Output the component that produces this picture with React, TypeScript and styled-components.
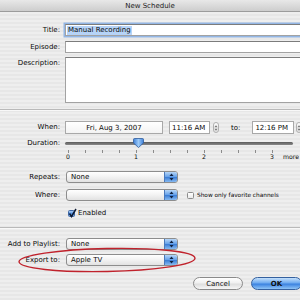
import styled, { createGlobalStyle } from "styled-components";

const GlobalStyle = createGlobalStyle`
  html, body { margin: 0; padding: 0; }
  body { font-family: "DejaVu Sans", "Noto Sans", sans-serif; }
`;

const Window = styled.div`
  width: 300px;
  height: 300px;
  overflow: hidden;
  position: relative;
  background: repeating-linear-gradient(#eeeeee 0 2px, #e7e7e7 2px 4px);
  font-family: "DejaVu Sans", "Noto Sans", sans-serif;
  font-size: 7px;
  color: #0a0a0a;
`;

const TitleBar = styled.div`
  height: 11px;
  border-bottom: 1px solid #9c9c9c;
  background: linear-gradient(#e8e8e8, #cdcdcd);
  display: flex;
  align-items: center;
  justify-content: center;
  color: #222;
`;

const Form = styled.div`
  display: flex;
  flex-direction: column;
`;

const Row = styled.div<{ $top: number; $h: number }>`
  display: grid;
  grid-template-columns: 60px 1fr;
  column-gap: 5px;
  align-items: center;
  margin-top: ${(p) => p.$top}px;
  height: ${(p) => p.$h}px;
`;

const Label = styled.div<{ $top?: boolean }>`
  text-align: right;
  line-height: 1;
  white-space: nowrap;
  align-self: ${(p) => (p.$top ? "start" : "center")};
  padding-top: ${(p) => (p.$top ? "3px" : "0")};
`;

const TextField = styled.div<{ $focus?: boolean }>`
  height: 100%;
  box-sizing: border-box;
  background: #fff;
  border: 1px solid #a2a2a2;
  border-top-color: #7c7c7c;
  margin-right: -20px;
  display: flex;
  align-items: center;
  padding-left: 1px;
  box-shadow: ${(p) => (p.$focus ? "0 0 0 1.5px #93b6e4" : "none")};
`;

const Selected = styled.span`
  background: #b6d3f7;
  line-height: 9px;
  padding: 0 1px;
`;

const Separator = styled.div<{ $top: number }>`
  height: 1px;
  background: #b9b9b9;
  border-bottom: 1px solid #f8f8f8;
  margin-top: ${(p) => p.$top}px;
`;

const Inline = styled.div`
  display: flex;
  align-items: center;
  height: 100%;
`;

const DateBox = styled.div`
  width: 98px;
  height: 100%;
  box-sizing: border-box;
  border: 1px solid #a8a8a8;
  background: linear-gradient(#ffffff, #f3f3f3);
  display: flex;
  align-items: center;
  justify-content: center;
`;

const TimeBox = styled.div<{ $ml: number; $w: number }>`
  width: ${(p) => p.$w}px;
  margin-left: ${(p) => p.$ml}px;
  height: 100%;
  box-sizing: border-box;
  border: 1px solid #a8a8a8;
  background: #fff;
  display: flex;
  align-items: center;
  padding-left: 2px;
`;

const Stepper = styled.div<{ $ml: number }>`
  margin-left: ${(p) => p.$ml}px;
  width: 6px;
  height: 11px;
  box-sizing: border-box;
  border: 1px solid #b0b0b0;
  border-radius: 3px;
  background: linear-gradient(#fdfdfd, #e3e3e3);
  display: flex;
  align-items: center;
  justify-content: center;
`;

const ToText = styled.span`
  margin-left: 12px;
`;

const SliderArea = styled.div`
  position: relative;
  height: 100%;
  width: 228px;
  display: flex;
  align-items: center;
`;

const Track = styled.div`
  width: 100%;
  height: 3px;
  border-radius: 2px;
  background: linear-gradient(#5a5a5a, #8a8a8a);
`;

const Thumb = styled.svg`
  position: absolute;
  left: 68px;
  top: 0;
`;

const TickRow = styled.div`
  margin-left: 68px;
  margin-top: 1px;
  width: 205px;
  height: 3px;
  display: flex;
  justify-content: space-between;
`;

const Tick = styled.div`
  width: 1px;
  height: 3px;
  background: #8c8c8c;
`;

const TickLabels = styled.div`
  margin-left: 60px;
  margin-top: 1px;
  height: 7px;
  display: flex;
  align-items: center;
  line-height: 1;
  font-size: 6.2px;
`;

const TickLabel = styled.span<{ $first?: boolean }>`
  width: 16px;
  text-align: center;
  margin-left: ${(p) => (p.$first ? 0 : 52)}px;
`;

const More = styled.span`
  margin-left: 3px;
`;

const Popup = styled.div`
  width: 112px;
  height: 100%;
  margin-left: 1px;
  box-sizing: border-box;
  border: 1px solid #8d8d8d;
  border-radius: 3px;
  background: linear-gradient(#ffffff, #f2f2f2 50%, #e2e2e2);
  display: flex;
  align-items: stretch;
  overflow: hidden;
`;

const PopupText = styled.div`
  flex: 1;
  display: flex;
  align-items: center;
  padding-left: 4px;
`;

const PopupArrows = styled.div`
  width: 12px;
  border-left: 1px solid #4a79bb;
  background: linear-gradient(#b6d6f8, #6aa4ea 45%, #3e7fd6 55%, #86baf2);
  display: flex;
  align-items: center;
  justify-content: center;
`;

const CheckBox = styled.div<{ $checked?: boolean; $ml: number }>`
  width: 7px;
  height: 7px;
  margin-left: ${(p) => p.$ml}px;
  box-sizing: border-box;
  border: 1px solid ${(p) => (p.$checked ? "#3e67a6" : "#8c8c8c")};
  border-radius: 1.5px;
  background: ${(p) =>
    p.$checked
      ? "linear-gradient(#a9cdf6, #4b8ce0 55%, #7db4f0)"
      : "linear-gradient(#ffffff, #e9e9e9)"};
  position: relative;
  flex: none;
`;

const CheckMark = styled.svg`
  position: absolute;
  left: -1px;
  top: -3px;
`;

const CheckText = styled.span<{ $small?: boolean }>`
  margin-left: 3px;
  font-size: ${(p) => (p.$small ? "5.8px" : "7px")};
  white-space: nowrap;
`;

const ButtonRow = styled.div`
  display: flex;
  gap: 8px;
  margin-top: 11px;
  padding-left: 193px;
  height: 13px;
`;

const Button = styled.div<{ $primary?: boolean }>`
  width: ${(p) => (p.$primary ? 51 : 50)}px;
  flex: none;
  height: 13px;
  box-sizing: border-box;
  border-radius: 7px;
  border: 1px solid ${(p) => (p.$primary ? "#34609f" : "#8a8a8a")};
  background: ${(p) =>
    p.$primary
      ? "linear-gradient(#c4e0fb, #6eaaf0 45%, #3b82e0 55%, #8fc4f7)"
      : "linear-gradient(#ffffff, #f0f0f0 45%, #dedede 55%, #f6f6f6)"};
  display: flex;
  align-items: center;
  justify-content: center;
  font-weight: ${(p) => (p.$primary ? "bold" : "normal")};
  color: #111;
`;

const Annotation = styled.svg`
  position: absolute;
  left: 14px;
  top: 243px;
  pointer-events: none;
`;

function Arrows({ color }: { color: string }) {
  return (
    <svg width="5" height="8" viewBox="0 0 5 8">
      <path d="M2.5 0.5 L4.5 3 L0.5 3 Z" fill={color} />
      <path d="M2.5 7.5 L4.5 5 L0.5 5 Z" fill={color} />
    </svg>
  );
}

function PopupButton({ value }: { value: string }) {
  return (
    <Popup>
      <PopupText>{value}</PopupText>
      <PopupArrows>
        <Arrows color="#10213f" />
      </PopupArrows>
    </Popup>
  );
}

export default function App() {
  const ticks = Array.from({ length: 13 }, (_, i) => i);
  return (
    <Window>
      <GlobalStyle />
      <TitleBar>New Schedule</TitleBar>
      <Form>
        <Row $top={12} $h={12}>
          <Label>Title:</Label>
          <TextField $focus>
            <Selected>Manual Recording</Selected>
          </TextField>
        </Row>
        <Row $top={5} $h={12}>
          <Label>Episode:</Label>
          <TextField />
        </Row>
        <Row $top={4} $h={46}>
          <Label $top>Description:</Label>
          <TextField />
        </Row>
        <Separator $top={6} />
        <Row $top={10} $h={13}>
          <Label>When:</Label>
          <Inline>
            <DateBox>Fri, Aug 3, 2007</DateBox>
            <TimeBox $ml={6} $w={41}>11:16 AM</TimeBox>
            <Stepper $ml={3}>
              <Arrows color="#777" />
            </Stepper>
            <ToText>to:</ToText>
            <TimeBox $ml={12} $w={42}>12:16 PM</TimeBox>
            <Stepper $ml={2}>
              <Arrows color="#777" />
            </Stepper>
          </Inline>
        </Row>
        <Row $top={4} $h={11}>
          <Label>Duration:</Label>
          <SliderArea>
            <Track />
            <Thumb width="11" height="10" viewBox="0 0 11 10">
              <defs>
                <linearGradient id="thumb" x1="0" y1="0" x2="1" y2="0">
                  <stop offset="0" stopColor="#3d7fd8" />
                  <stop offset="0.5" stopColor="#9ccaf8" />
                  <stop offset="1" stopColor="#3d7fd8" />
                </linearGradient>
              </defs>
              <path
                d="M1.5 0.5 H9.5 Q10.5 0.5 10.5 1.5 V5 L5.5 9.5 L0.5 5 V1.5 Q0.5 0.5 1.5 0.5 Z"
                fill="url(#thumb)"
                stroke="#2f5c9c"
                strokeWidth="0.8"
              />
            </Thumb>
          </SliderArea>
        </Row>
        <TickRow>
          {ticks.map((t) => (
            <Tick key={t} />
          ))}
        </TickRow>
        <TickLabels>
          <TickLabel $first>0</TickLabel>
          <TickLabel>1</TickLabel>
          <TickLabel>2</TickLabel>
          <TickLabel>3</TickLabel>
          <More>more</More>
        </TickLabels>
        <Row $top={10} $h={12}>
          <Label>Repeats:</Label>
          <Inline>
            <PopupButton value="None" />
          </Inline>
        </Row>
        <Row $top={6} $h={12}>
          <Label>Where:</Label>
          <Inline>
            <PopupButton value="" />
            <CheckBox $ml={9} />
            <CheckText $small>Show only favorite channels</CheckText>
          </Inline>
        </Row>
        <Row $top={7} $h={10}>
          <Label />
          <Inline>
            <CheckBox $checked $ml={3}>
              <CheckMark width="9" height="10" viewBox="0 0 9 10">
                <path
                  d="M1.5 5.5 L3.5 8.5 L8 1"
                  fill="none"
                  stroke="#0d1a33"
                  strokeWidth="1.5"
                />
              </CheckMark>
            </CheckBox>
            <CheckText>Enabled</CheckText>
          </Inline>
        </Row>
        <Separator $top={9} />
        <Row $top={9} $h={12}>
          <Label>Add to Playlist:</Label>
          <Inline>
            <PopupButton value="None" />
          </Inline>
        </Row>
        <Row $top={4} $h={12}>
          <Label>Export to:</Label>
          <Inline>
            <PopupButton value="Apple TV" />
          </Inline>
        </Row>
        <ButtonRow>
          <Button>Cancel</Button>
          <Button $primary>OK</Button>
        </ButtonRow>
      </Form>
      <Annotation width="190" height="34" viewBox="0 0 190 34">
        <ellipse
          cx="93"
          cy="17"
          rx="88"
          ry="11.5"
          fill="none"
          stroke="#c0222c"
          strokeWidth="1.4"
          transform="rotate(-1.2 93 17)"
        />
      </Annotation>
    </Window>
  );
}
